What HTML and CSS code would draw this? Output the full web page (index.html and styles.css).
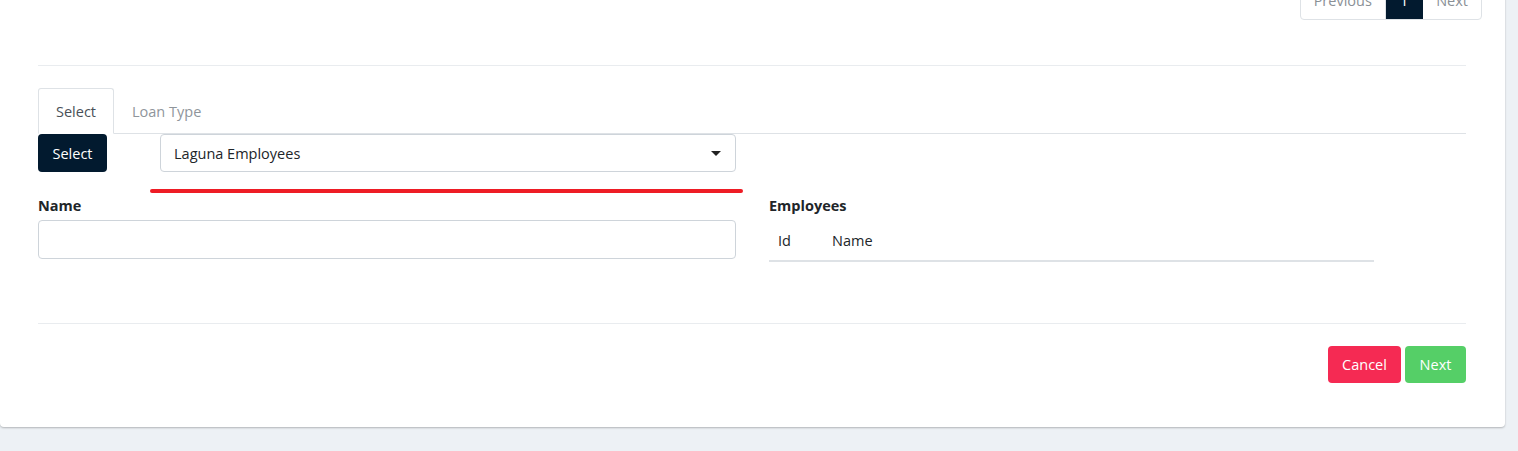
FILE: index.html
```html
<!DOCTYPE html>
<html>
<head>
<meta charset="utf-8">
<link rel="stylesheet" href="styles.css">
</head>
<body>
<div class="card">
  <div class="pager-row">
    <div class="pager">
      <span class="pg">Previous</span>
      <span class="pg active">1</span>
      <span class="pg">Next</span>
    </div>
  </div>
  <div class="body">
    <hr class="sep">
    <div class="tabs">
      <div class="tab active">Select</div>
      <div class="tab">Loan Type</div>
    </div>
    <div class="select-row">
      <button class="btn dark">Select</button>
      <div class="dropdown-wrap">
        <div class="dropdown">
          <span>Laguna Employees</span>
          <span class="caret"></span>
        </div>
        <div class="underline"></div>
      </div>
    </div>
    <div class="grid">
      <div class="col">
        <label class="lbl">Name</label>
        <div class="input"></div>
      </div>
      <div class="col">
        <label class="lbl">Employees</label>
        <div class="table">
          <div class="th id">Id</div>
          <div class="th">Name</div>
        </div>
      </div>
    </div>
    <hr class="sep bottom">
    <div class="actions">
      <button class="btn cancel">Cancel</button>
      <button class="btn next">Next</button>
    </div>
  </div>
</div>
</body>
</html>
```
FILE: styles.css
```css
* { box-sizing: border-box; }
html, body { margin: 0; padding: 0; }
body {
  background: #edf1f5;
  font-family: "Open Sans", "Noto Sans", sans-serif;
  font-size: 14.5px;
  color: #212529;
  height: 451px;
  overflow: hidden;
}
.card {
  width: 1505px;
  margin-top: -20px;
  background: #fff;
  border-radius: 0 0 4px 4px;
  box-shadow: 0 1px 2px rgba(0,0,0,0.25);
  padding-bottom: 44px;
}
.pager-row {
  display: flex;
  justify-content: flex-end;
  padding-right: 23px;
}
.pager {
  display: flex;
  border: 1px solid #dee2e6;
  border-radius: 4px;
  overflow: hidden;
  height: 40px;
}
.pg {
  display: flex;
  align-items: center;
  padding: 0 13px;
  color: #8a9096;
  font-size: 14.5px;
  border-right: 1px solid #dee2e6;
}
.pg:last-child { border-right: none; }
.pg.active { background: #021a2f; color: #fff; padding: 0 14px; border-color: #021a2f; }
.body { padding: 0 39px 0 38px; }
.sep {
  border: none;
  border-top: 1px solid #e9ecef;
  margin: 45px 0 22px;
}
.tabs {
  display: flex;
  border-bottom: 1px solid #dee2e6;
  height: 46px;
}
.tab {
  padding: 0 17px;
  display: flex;
  align-items: center;
  color: #8f959b;
  font-size: 14.5px;
  border: 1px solid transparent;
  border-top-left-radius: 3px;
  border-top-right-radius: 3px;
  margin-bottom: -1px;
}
.tab.active {
  color: #495057;
  border-color: #dee2e6 #dee2e6 #fff;
  background: #fff;
}
.select-row {
  display: flex;
  align-items: flex-start;
}
.btn {
  font-family: inherit;
  font-size: 14.5px;
  border: none;
  border-radius: 4px;
  color: #fff;
  cursor: pointer;
}
.btn.dark {
  background: #021a2f;
  width: 69px;
  height: 38px;
}
.dropdown-wrap {
  margin-left: 43px;
  width: 593px;
  display: flex;
  flex-direction: column;
  align-items: flex-start;
}
.dropdown {
  margin-left: 10px;
  width: 576px;
  height: 38px;
  border: 1px solid #ced4da;
  border-radius: 4px;
  display: flex;
  align-items: center;
  justify-content: space-between;
  padding: 0 14px 0 13px;
  color: #212529;
}
.caret {
  width: 0; height: 0;
  border-left: 5px solid transparent;
  border-right: 5px solid transparent;
  border-top: 5px solid #222;
}
.underline {
  width: 593px;
  height: 4px;
  background: #ee1c25;
  border-radius: 2px;
  margin-top: 17px;
}
.grid {
  display: grid;
  grid-template-columns: 698px 605px;
  column-gap: 33px;
  margin-top: 3px;
}
.lbl {
  display: block;
  font-weight: 700;
  font-size: 14.5px;
  color: #212529;
  line-height: 20px;
  margin-bottom: 4px;
}
.input {
  height: 39px;
  border: 1px solid #ced4da;
  border-radius: 4px;
}
.table {
  display: flex;
  border-bottom: 2px solid #dee2e6;
  height: 42px;
  align-items: center;
  margin-top: 1px;
}
.th { padding: 0 9px; color: #212529; }
.th.id { width: 54px; }
.sep.bottom { margin: 61px 0 22px; }
.actions {
  display: flex;
  justify-content: flex-end;
  gap: 4px;
}
.btn.cancel { background: #f52a53; width: 73px; height: 37px; }
.btn.next { background: #55cf67; width: 61px; height: 37px; }
```
